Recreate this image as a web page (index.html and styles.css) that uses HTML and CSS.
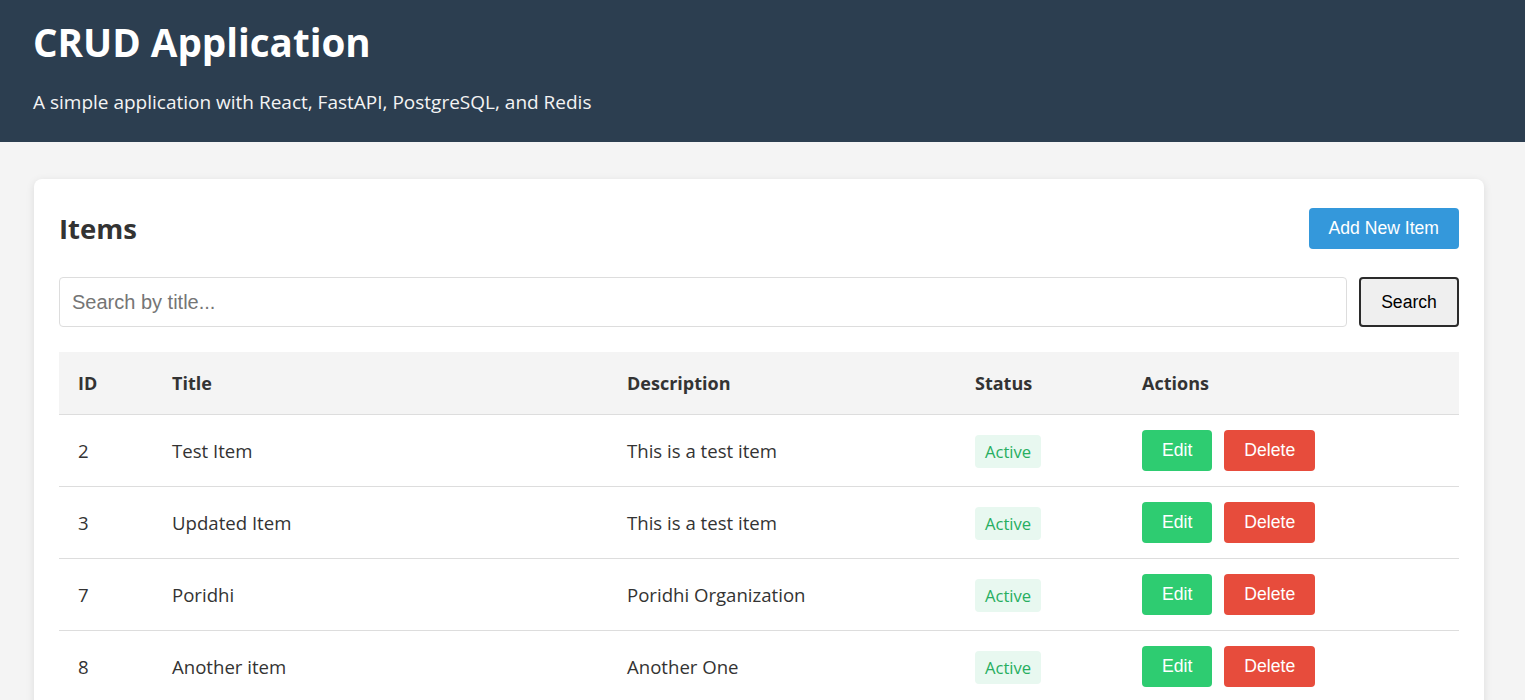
FILE: index.html
```html
<!DOCTYPE html>
<html lang="en">
<head>
<meta charset="utf-8">
<title>CRUD Application</title>
<link rel="stylesheet" href="styles.css">
</head>
<body>
<header class="app-header">
  <h1 class="app-title">CRUD Application</h1>
  <p class="app-subtitle">A simple application with React, FastAPI, PostgreSQL, and Redis</p>
</header>
<main class="app-main">
  <section class="card">
    <div class="card-head">
      <h2 class="card-title">Items</h2>
      <button class="btn btn-primary">Add New Item</button>
    </div>
    <form class="search-bar">
      <input class="search-input" type="text" placeholder="Search by title...">
      <button class="btn-search" type="button">Search</button>
    </form>
    <table class="items-table">
      <colgroup>
        <col class="c-id"><col class="c-title"><col class="c-desc"><col class="c-status"><col class="c-actions">
      </colgroup>
      <thead>
        <tr><th>ID</th><th>Title</th><th>Description</th><th>Status</th><th>Actions</th></tr>
      </thead>
      <tbody>
        <tr>
          <td>2</td><td>Test Item</td><td>This is a test item</td>
          <td><span class="badge">Active</span></td>
          <td><div class="actions"><button class="btn btn-edit">Edit</button><button class="btn btn-delete">Delete</button></div></td>
        </tr>
        <tr>
          <td>3</td><td>Updated Item</td><td>This is a test item</td>
          <td><span class="badge">Active</span></td>
          <td><div class="actions"><button class="btn btn-edit">Edit</button><button class="btn btn-delete">Delete</button></div></td>
        </tr>
        <tr>
          <td>7</td><td>Poridhi</td><td>Poridhi Organization</td>
          <td><span class="badge">Active</span></td>
          <td><div class="actions"><button class="btn btn-edit">Edit</button><button class="btn btn-delete">Delete</button></div></td>
        </tr>
        <tr>
          <td>8</td><td>Another item</td><td>Another One</td>
          <td><span class="badge">Active</span></td>
          <td><div class="actions"><button class="btn btn-edit">Edit</button><button class="btn btn-delete">Delete</button></div></td>
        </tr>
      </tbody>
    </table>
  </section>
</main>
</body>
</html>
```

FILE: styles.css
```css
* { box-sizing: border-box; }

body {
  margin: 0;
  background: #f4f4f4;
  font-family: "Open Sans", "Noto Sans", sans-serif;
  color: #333;
}

.app-header {
  background: #2c3e50;
  color: #fff;
  height: 142px;
  padding: 16px 32px 0 33px;
}

.app-title {
  margin: 0;
  font-size: 38.6px;
  font-weight: 700;
  line-height: 52px;
}

.app-subtitle {
  margin: 21px 0 0 0;
  font-size: 19px;
  line-height: 26px;
  color: #f4f4f4;
}

.app-main {
  padding: 37px 41px 0 34px;
}

.card {
  background: #fff;
  border-radius: 8px;
  box-shadow: 0 2px 8px rgba(0, 0, 0, 0.1);
  padding: 29px 25px 24px 25px;
}

.card-head {
  display: flex;
  justify-content: space-between;
  align-items: center;
}

.card-title {
  margin: 0;
  font-size: 27.5px;
  font-weight: 700;
  color: #333;
}

.btn {
  font-family: "Liberation Sans", Arial, sans-serif;
  font-size: 17.6px;
  line-height: 21px;
  border: none;
  border-radius: 4px;
  color: #fff;
  padding: 10px 20px;
  cursor: pointer;
}

.btn-primary { background: #3498db; }
.btn-edit { background: #2ecc71; }
.btn-delete { background: #e74c3c; }

.search-bar {
  display: flex;
  gap: 12px;
  margin: 28px 0 25px 0;
}

.search-input {
  flex: 1;
  height: 50px;
  border: 1px solid #ddd;
  border-radius: 4px;
  padding: 0 12px;
  font-family: "Liberation Sans", Arial, sans-serif;
  font-size: 20px;
  color: #333;
  outline: none;
}

.search-input::placeholder { color: #757575; }

.btn-search {
  width: 100px;
  height: 50px;
  background: #efefef;
  border: 2px solid #2b2b2b;
  border-radius: 4px;
  font-family: "Liberation Sans", Arial, sans-serif;
  font-size: 17.6px;
  color: #000;
}

.items-table {
  width: 100%;
  border-collapse: collapse;
  table-layout: fixed;
}

.c-id { width: 94px; }
.c-title { width: 455px; }
.c-desc { width: 348px; }
.c-status { width: 167px; }
.c-actions { width: auto; }

.items-table th {
  background: #f4f4f4;
  text-align: left;
  font-weight: 700;
  font-size: 18px;
  line-height: 24px;
  padding: 19px 19px;
  border-bottom: 1px solid #ddd;
}

.items-table td {
  font-size: 18.6px;
  line-height: 24px;
  padding: 15px 19px;
  border-bottom: 1px solid #ddd;
  vertical-align: middle;
}

.badge {
  display: inline-block;
  background: #e8f8f0;
  color: #27ae60;
  border-radius: 4px;
  padding: 4px 10px;
  margin-top: 2px;
  font-size: 16.6px;
  line-height: 25px;
}

.actions {
  display: flex;
  gap: 12px;
}
```
